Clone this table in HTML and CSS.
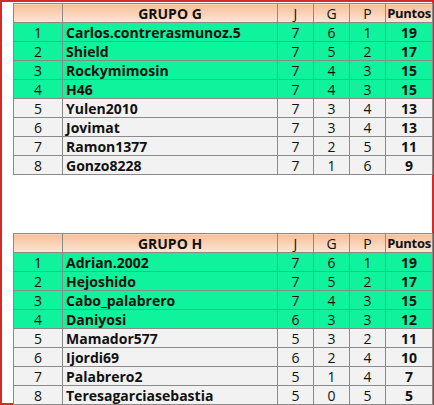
FILE: index.html
```html
<!DOCTYPE html>
<html>
<head>
<meta charset="utf-8">
<link rel="stylesheet" href="styles.css">
</head>
<body>
<div class="frame">
<table class="grupo">
  <colgroup><col class="c-pos"><col class="c-name"><col class="c-n"><col class="c-n"><col class="c-n"><col class="c-pts"></colgroup>
  <thead>
    <tr><th></th><th class="b">GRUPO G</th><th>J</th><th>G</th><th>P</th><th class="b pts">Puntos</th></tr>
  </thead>
  <tbody>
    <tr class="up"><td>1</td><td class="name">Carlos.contrerasmunoz.5</td><td>7</td><td>6</td><td>1</td><td class="b">19</td></tr>
    <tr class="up"><td>2</td><td class="name">Shield</td><td>7</td><td>5</td><td>2</td><td class="b">17</td></tr>
    <tr class="up"><td>3</td><td class="name">Rockymimosin</td><td>7</td><td>4</td><td>3</td><td class="b">15</td></tr>
    <tr class="up"><td>4</td><td class="name">H46</td><td>7</td><td>4</td><td>3</td><td class="b">15</td></tr>
    <tr><td>5</td><td class="name">Yulen2010</td><td>7</td><td>3</td><td>4</td><td class="b">13</td></tr>
    <tr><td>6</td><td class="name">Jovimat</td><td>7</td><td>3</td><td>4</td><td class="b">13</td></tr>
    <tr><td>7</td><td class="name">Ramon1377</td><td>7</td><td>2</td><td>5</td><td class="b">11</td></tr>
    <tr><td>8</td><td class="name">Gonzo8228</td><td>7</td><td>1</td><td>6</td><td class="b">9</td></tr>
  </tbody>
</table>
<table class="grupo second">
  <colgroup><col class="c-pos"><col class="c-name"><col class="c-n"><col class="c-n"><col class="c-n"><col class="c-pts"></colgroup>
  <thead>
    <tr><th></th><th class="b">GRUPO H</th><th>J</th><th>G</th><th>P</th><th class="b pts">Puntos</th></tr>
  </thead>
  <tbody>
    <tr class="up"><td>1</td><td class="name">Adrian.2002</td><td>7</td><td>6</td><td>1</td><td class="b">19</td></tr>
    <tr class="up"><td>2</td><td class="name">Hejoshido</td><td>7</td><td>5</td><td>2</td><td class="b">17</td></tr>
    <tr class="up"><td>3</td><td class="name">Cabo_palabrero</td><td>7</td><td>4</td><td>3</td><td class="b">15</td></tr>
    <tr class="up"><td>4</td><td class="name">Daniyosi</td><td>6</td><td>3</td><td>3</td><td class="b">12</td></tr>
    <tr><td>5</td><td class="name">Mamador577</td><td>5</td><td>3</td><td>2</td><td class="b">11</td></tr>
    <tr><td>6</td><td class="name">Ijordi69</td><td>6</td><td>2</td><td>4</td><td class="b">10</td></tr>
    <tr><td>7</td><td class="name">Palabrero2</td><td>5</td><td>1</td><td>4</td><td class="b">7</td></tr>
    <tr><td>8</td><td class="name">Teresagarciasebastia</td><td>5</td><td>0</td><td>5</td><td class="b">5</td></tr>
  </tbody>
</table>
</div>
</body>
</html>
```
FILE: styles.css
```css
html, body {
  margin: 0;
  padding: 0;
  background: #ffffff;
}
.frame {
  box-sizing: border-box;
  width: 434px;
  height: 405px;
  border: 2px solid #d42a2a;
  padding: 1px 0 0 11px;
  font-family: "Open Sans", Lato, sans-serif;
  font-size: 14px;
  color: #111;
}
.grupo {
  border-collapse: collapse;
  table-layout: fixed;
  width: 419px;
}
.second {
  margin-top: 58px;
}
.c-pos { width: 49px; }
.c-name { width: 215px; }
.c-n { width: 36px; }
.c-pts { width: 47px; }
.grupo th, .grupo td {
  border: 1px solid #8a8a8a;
  height: 18px;
  padding: 0;
  line-height: 17px;
  text-align: center;
  font-weight: normal;
  white-space: nowrap;
  overflow: hidden;
}
.grupo th {
  background: linear-gradient(#f6bf98, #fde6d6);
}
.grupo th.pts {
  font-size: 13px;
  letter-spacing: -0.3px;
}
.grupo tbody tr {
  background: #f2f2f2;
}
.grupo tbody tr.up {
  background: #0ff39c;
}
.grupo td.name {
  text-align: left;
  padding-left: 3px;
  font-weight: bold;
}
.grupo .b {
  font-weight: bold;
}
```
